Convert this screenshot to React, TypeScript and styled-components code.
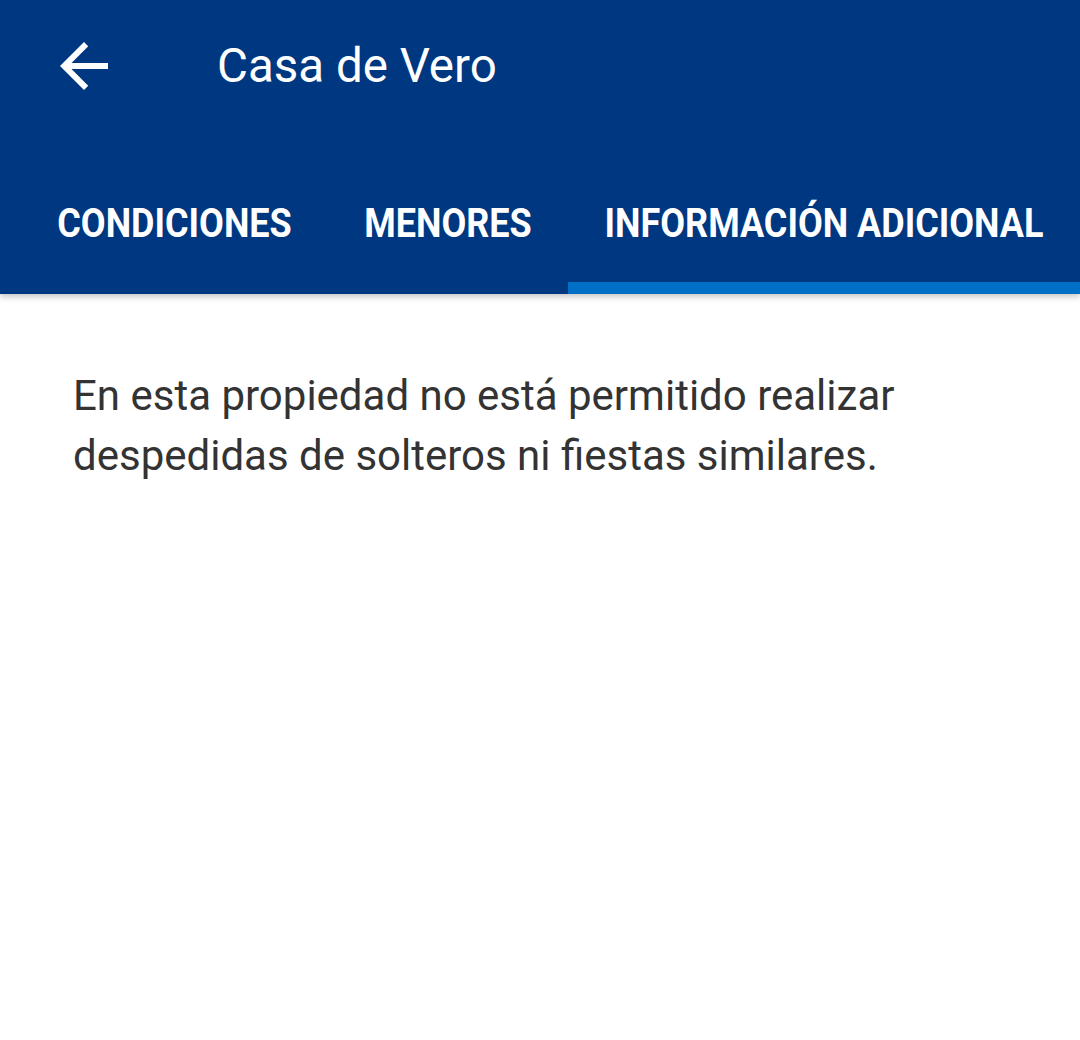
import styled, { createGlobalStyle } from 'styled-components';

const GlobalStyle = createGlobalStyle`
  html, body {
    margin: 0;
    padding: 0;
    background: #ffffff;
    font-family: Roboto, 'Liberation Sans', sans-serif;
  }
`;

const tabs = ['CONDICIONES', 'MENORES', 'INFORMACIÓN ADICIONAL'];

export default function App() {
  const active = 2;

  return (
    <Page>
      <GlobalStyle />
      <AppBar>
        <Toolbar>
          <BackButton aria-label="Volver">
            <svg width="72" height="72" viewBox="0 0 24 24" fill="#ffffff">
              <path d="M20 11H7.83l5.59-5.59L12 4l-8 8 8 8 1.41-1.41L7.83 13H20v-2z" />
            </svg>
          </BackButton>
          <Title>Casa de Vero</Title>
        </Toolbar>
        <TabRow>
          {tabs.map((label, i) => (
            <Tab key={label} active={i === active}>
              <TabLabel>{label}</TabLabel>
            </Tab>
          ))}
        </TabRow>
      </AppBar>
      <Content>
        <Body>
          En esta propiedad no está permitido realizar despedidas de solteros ni fiestas similares.
        </Body>
      </Content>
    </Page>
  );
}

const Page = styled.div`
  width: 1080px;
  min-height: 1040px;
  background: #ffffff;
`;

const AppBar = styled.header`
  background: #003781;
  box-shadow: 0 3px 6px rgba(0, 0, 0, 0.22);
  position: relative;
  z-index: 1;
`;

const Toolbar = styled.div`
  height: 132px;
  display: flex;
  align-items: center;
  padding-left: 48px;
`;

const BackButton = styled.button`
  width: 72px;
  height: 72px;
  padding: 0;
  border: none;
  background: transparent;
  display: flex;
  cursor: pointer;
`;

const Title = styled.h1`
  margin: 0 0 0 97px;
  font-size: 47.5px;
  font-weight: 400;
  color: #ffffff;
  font-family: Roboto, 'Liberation Sans', sans-serif;
`;

const TabRow = styled.nav`
  height: 162px;
  display: flex;
  align-items: stretch;
  padding-left: 21px;
`;

const Tab = styled.div<{ active: boolean }>`
  display: flex;
  align-items: center;
  justify-content: center;
  padding: 32px 36.3px 0;
  color: #ffffff;
  white-space: nowrap;
  border-bottom: 12px solid ${p => (p.active ? '#0070c6' : 'transparent')};

  &:last-child {
    flex: 1;
  }
`;

const TabLabel = styled.span`
  display: inline-block;
  font-size: 36px;
  font-weight: 700;
  transform: scaleY(1.15);
`;

const Content = styled.main`
  padding: 72px 73px;
`;

const Body = styled.p`
  margin: 0;
  font-size: 42px;
  line-height: 60px;
  color: #333333;
  max-width: 860px;
`;
